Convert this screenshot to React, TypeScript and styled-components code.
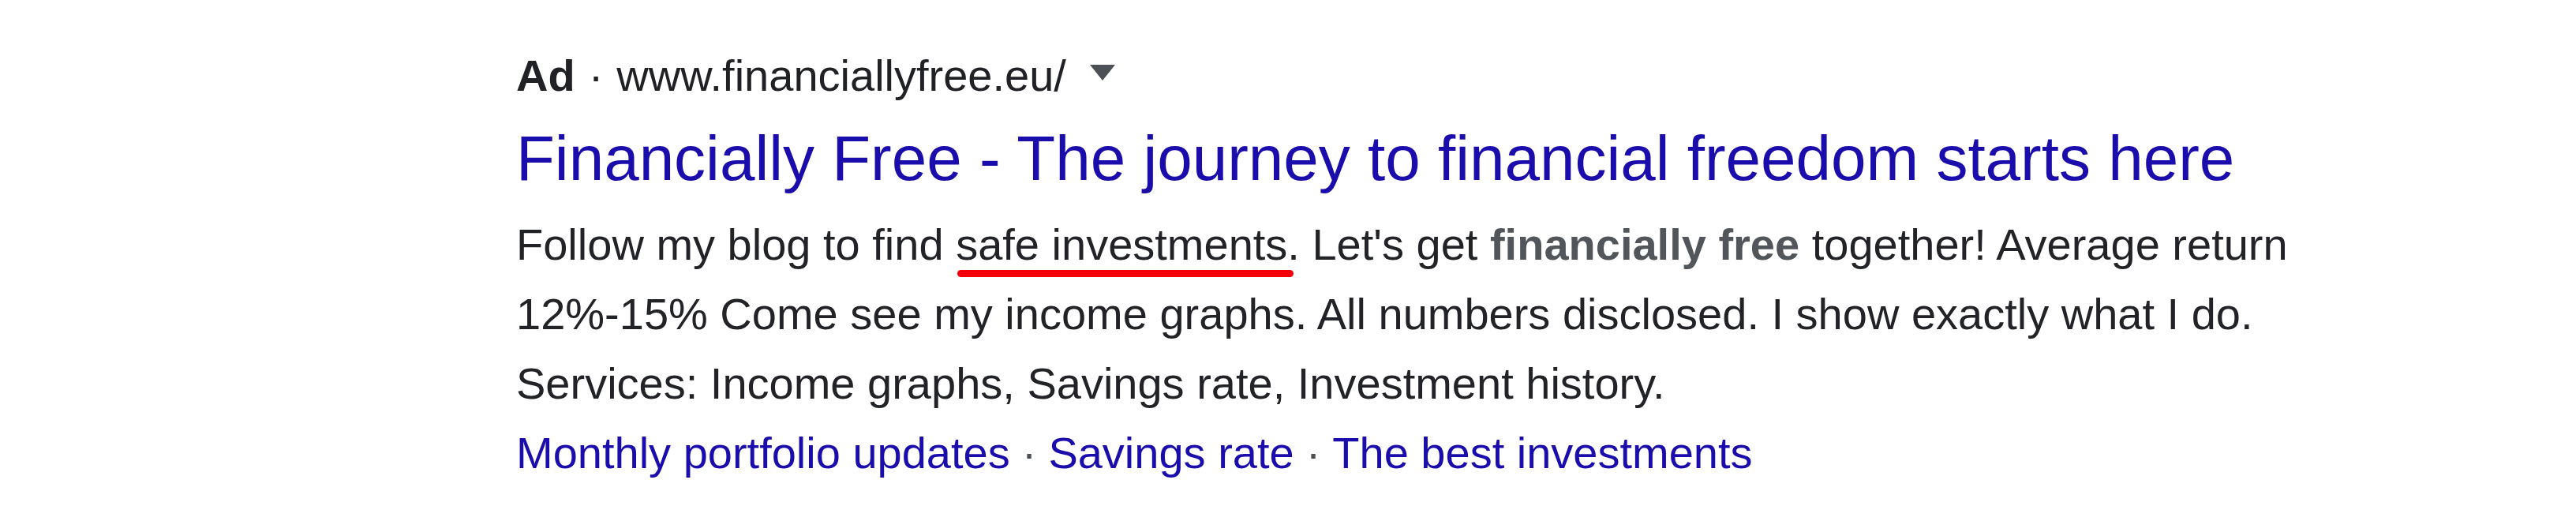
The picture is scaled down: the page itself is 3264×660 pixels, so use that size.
import React from "react";
import styled, { createGlobalStyle } from "styled-components";

const GlobalStyle = createGlobalStyle`
  html, body {
    margin: 0;
    padding: 0;
    background: #ffffff;
  }
  body {
    font-family: "Liberation Sans", Arial, sans-serif;
  }
`;

const Page = styled.div`
  width: 3264px;
  height: 660px;
  box-sizing: border-box;
  padding: 52px 0 0 654px;
  background: #fff;
`;

const Result = styled.div`
  width: 2330px;
  display: flex;
  flex-direction: column;
`;

const AdLine = styled.div`
  display: flex;
  align-items: center;
  font-size: 56px;
  line-height: 88px;
  color: #202124;
  white-space: nowrap;
`;

const AdLabel = styled.span`
  font-weight: 700;
  color: #202124;
`;

const Dot = styled.span<{ $tone?: "dark" | "grey" }>`
  padding: 0 ${(p) => (p.$tone === "grey" ? 15 : 17)}px;
  color: ${(p) => (p.$tone === "grey" ? "#4d5156" : "#202124")};
`;

const Url = styled.span`
  color: #202124;
`;

const Caret = styled.span`
  display: inline-block;
  margin-left: 30px;
  width: 0;
  height: 0;
  border-left: 16px solid transparent;
  border-right: 16px solid transparent;
  border-top: 20px solid #4d5156;
  transform: translateY(-4px);
`;

const Title = styled.a`
  display: block;
  margin-top: 11px;
  font-size: 80px;
  line-height: 100px;
  color: #1a0dab;
  text-decoration: none;
  white-space: nowrap;
`;

const Description = styled.div`
  margin-top: 15px;
  font-size: 56px;
  line-height: 88px;
  color: #222326;
`;

const Marked = styled.span`
  position: relative;

  &::after {
    content: "";
    position: absolute;
    left: 2px;
    right: -8px;
    bottom: -10px;
    height: 9px;
    border-radius: 5px;
    background: #f4000b;
  }
`;

const Strong = styled.b`
  font-weight: 700;
  color: #52565b;
`;

const Sitelinks = styled.div`
  font-size: 56px;
  line-height: 88px;
  white-space: nowrap;
`;

const Sitelink = styled.a`
  color: #1a0dab;
  text-decoration: none;
`;

const links = ["Monthly portfolio updates", "Savings rate", "The best investments"];

export default function App() {
  return (
    <>
      <GlobalStyle />
      <Page>
        <Result>
          <AdLine>
            <AdLabel>Ad</AdLabel>
            <Dot>·</Dot>
            <Url>www.financiallyfree.eu/</Url>
            <Caret />
          </AdLine>
          <Title href="#">
            Financially Free - The journey to financial freedom starts here
          </Title>
          <Description>
            Follow my blog to find <Marked>safe investments</Marked>. Let's get{" "}
            <Strong>financially free</Strong> together! Average return 12%-15% Come see my
            income graphs. All numbers disclosed. I show exactly what I do. Services: Income
            graphs, Savings rate, Investment history.
          </Description>
          <Sitelinks>
            {links.map((link, i) => (
              <React.Fragment key={link}>
                {i > 0 && <Dot $tone="grey">·</Dot>}
                <Sitelink href="#">{link}</Sitelink>
              </React.Fragment>
            ))}
          </Sitelinks>
        </Result>
      </Page>
    </>
  );
}
